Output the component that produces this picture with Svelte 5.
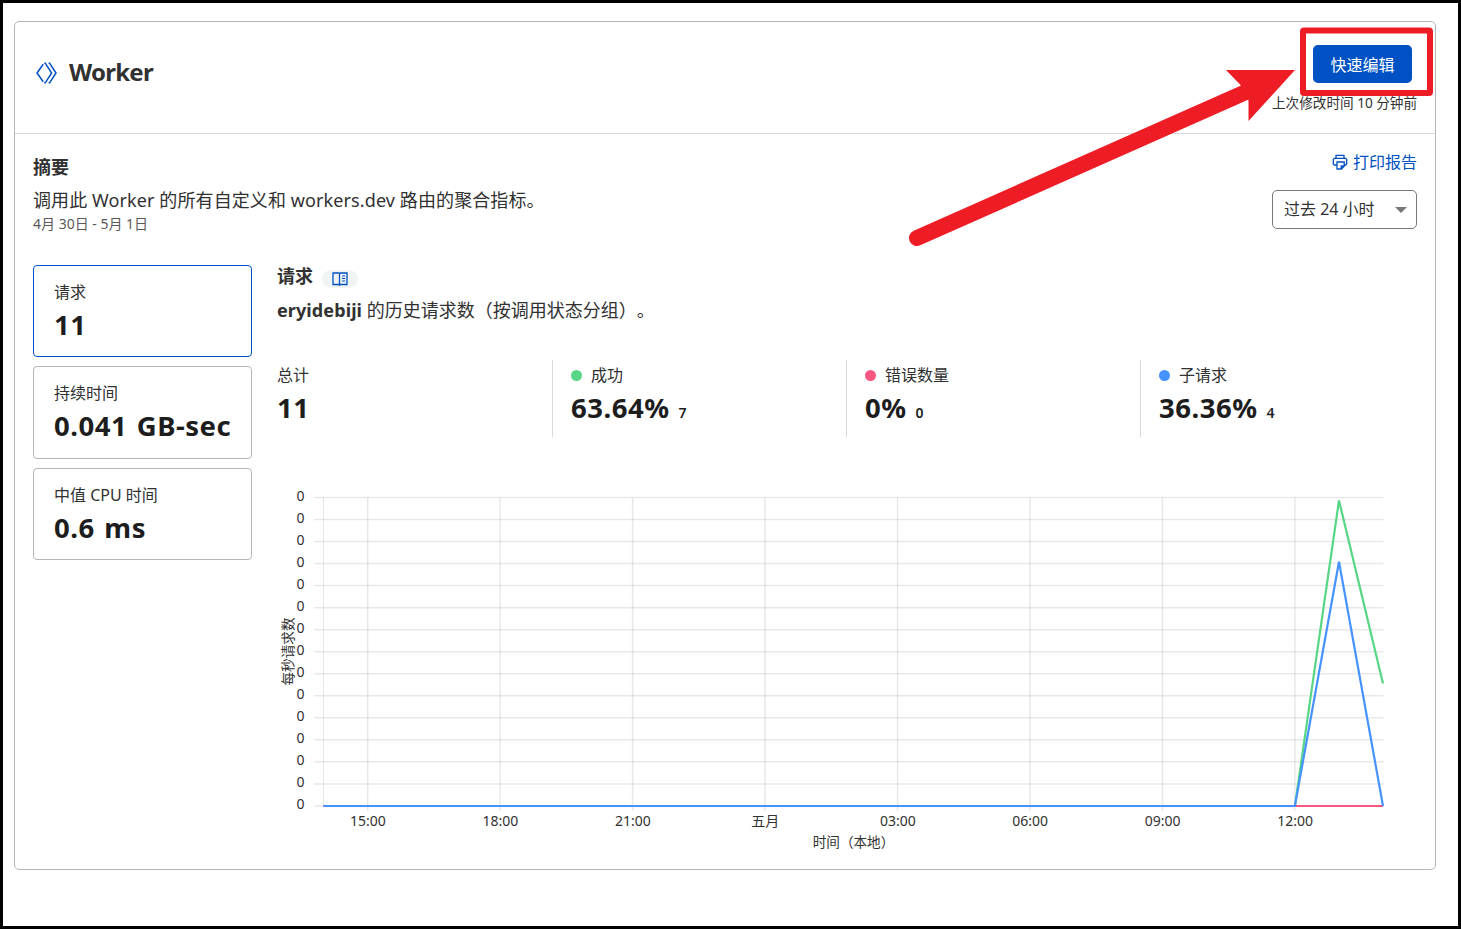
<script lang="ts">
	interface Card {
		label: string;
		value: string;
		active?: boolean;
	}

	interface Stat {
		label: string;
		value: string;
		count?: string;
		color?: string;
	}

	const cards: Card[] = [
		{ label: '请求', value: '11', active: true },
		{ label: '持续时间', value: '0.041 GB-sec' },
		{ label: '中值 CPU 时间', value: '0.6 ms' },
	];

	const stats: Stat[] = [
		{ label: '总计', value: '11' },
		{ label: '成功', value: '63.64%', count: '7', color: '#57d685' },
		{ label: '错误数量', value: '0%', count: '0', color: '#f85782' },
		{ label: '子请求', value: '36.36%', count: '4', color: '#4693ff' },
	];

	// chart geometry, in svg units
	const left = 46.5;
	const right = 1106;
	const top = 17.5;
	const bottom = 326;
	const rows = Array.from({ length: 15 }, (_, i) => top + i * 22.03);

	const hours = ['15:00', '18:00', '21:00', '五月', '03:00', '06:00', '09:00', '12:00'];
	const ticks = hours.map((label, i) => ({ label, x: 90.7 + i * 132.45 }));
</script>

<div class="page">
	<section class="panel">
		<header>
			<div class="title">
				<svg class="logo" width="22" height="22" viewBox="0 0 22 22" aria-hidden="true">
					<path d="M7.2 2.2L1 11l6.2 8.8M8.3 1.2H9.3L15.6 11L9.3 20.8H8.3M12.6 1.2H13.6L20 11L13.6 20.8H12.6" />
				</svg>
				<h1>Worker</h1>
			</div>
			<div class="actions">
				<button class="primary">快速编辑</button>
				<span class="modified">上次修改时间 10 分钟前</span>
			</div>
		</header>

		<div class="summary">
			<div>
				<h2>摘要</h2>
				<p class="desc">调用此 Worker 的所有自定义和 workers.dev 路由的聚合指标。</p>
				<p class="range">4月 30日 - 5月 1日</p>
			</div>
			<div class="tools">
				<a class="print" href="#print">
					<svg width="16" height="16" viewBox="0 0 16 16" aria-hidden="true">
						<path d="M4 4.3V1.3h8v3M4.5 11H2.3L1.3 10V5.3L2.3 4.3H13.7L14.7 5.3V10L13.7 11H12.2M5 8h7.2v4.2l-2.8 2.8H5zM9.2 15v-3h3" />
					</svg>
					<span>打印报告</span>
				</a>
				<button class="select">
					<span>过去 24 小时</span>
					<i class="caret"></i>
				</button>
			</div>
		</div>

		<div class="content">
			<aside>
				{#each cards as card}
					<div class="card" class:active={card.active}>
						<span class="label">{card.label}</span>
						<strong>{card.value}</strong>
					</div>
				{/each}
			</aside>

			<div class="metrics">
				<div class="heading">
					<h2>请求</h2>
					<span class="docs">
						<svg width="16" height="14" viewBox="0 0 16 14" aria-hidden="true">
							<path d="M7.5 1H1v11.5h5.5l1 .8 1-.8H15V1H8.5L7.5 1.8V13" />
							<path class="rows" d="M10 4h3.2M10 6.5h3.2M10 9h3.2" />
						</svg>
					</span>
				</div>
				<p class="history"><b>eryidebiji</b> 的历史请求数（按调用状态分组）。</p>

				<div class="stats">
					{#each stats as stat}
						<div class="stat">
							<div class="label">
								{#if stat.color}
									<i class="dot" style="background:{stat.color}"></i>
								{/if}
								<span>{stat.label}</span>
							</div>
							<div class="figure">
								<strong>{stat.value}</strong>
								{#if stat.count}
									<small>{stat.count}</small>
								{/if}
							</div>
						</div>
					{/each}
				</div>

				<svg class="chart" width="1140" height="380" viewBox="0 0 1140 380">
					<g class="grid">
						{#each rows as y}
							<line x1="37" x2={right + 0.5} y1={y} y2={y} />
						{/each}
						<line class="edge" x1={left} x2={left} y1={top} y2={bottom} />
						{#each ticks as tick}
							<line x1={tick.x} x2={tick.x} y1={top} y2={bottom + 5} />
						{/each}
					</g>
					{#each rows as y}
						<text x="27.5" y={y + 3.1} text-anchor="end">0</text>
					{/each}
					{#each ticks as tick}
						<text x={tick.x + 0.3} y="346.3" text-anchor="middle">{tick.label}</text>
					{/each}
					<text class="axis" transform="translate(15.5 171.5) rotate(-90)" text-anchor="middle">每秒请求数</text>
					<text class="axis" x="576.5" y="366.5" text-anchor="middle">时间（本地）</text>
					<g class="lines">
						<polyline stroke="#57d685" points="{left},{bottom} 1017.9,{bottom} 1062,20.5 {right},203.5" />
						<polyline stroke="#f85782" points="{left},{bottom} {right},{bottom}" />
						<polyline stroke="#4693ff" points="{left},{bottom} 1017.9,{bottom} 1062,81.7 {right},{bottom}" />
					</g>
				</svg>
			</div>
		</div>
	</section>

	<svg class="callout" width="1461" height="929" viewBox="0 0 1461 929" aria-hidden="true">
		<rect x="1303" y="30.5" width="127" height="62.5" rx="1" />
		<path class="shaft" d="M917 238L1246 92" />
		<path class="head" d="M1226 70H1295L1248.5 121V100L1240.5 85z" />
	</svg>
</div>

<style>
	:global(body) {
		margin: 0;
	}
	.page {
		position: relative;
		box-sizing: border-box;
		width: 1461px;
		height: 929px;
		padding: 18px 22px 0 11px;
		border: 3px solid #000;
		background: #fff;
		color: #313131;
		font-family: 'Noto Sans', 'Noto Sans CJK SC', sans-serif;
		font-size: 16px;
		text-spacing-trim: space-all;
		overflow: hidden;
	}
	h1,
	h2,
	p {
		margin: 0;
	}
	.panel {
		box-sizing: border-box;
		width: 1422px;
		height: 849px;
		border: 1px solid #b6b6b6;
		border-radius: 5px;
	}
	header {
		display: flex;
		justify-content: space-between;
		box-sizing: border-box;
		height: 112px;
		padding: 23px 18px 0 21px;
		border-bottom: 1px solid #d9d9d9;
	}
	.title {
		display: flex;
		align-items: center;
		gap: 11px;
		height: 56px;
	}
	h1 {
		margin-top: -2px;
		font-size: 24px;
		font-weight: 700;
		line-height: 32px;
		letter-spacing: -0.75px;
	}
	.logo,
	.print svg,
	.docs svg {
		fill: none;
		stroke: #0051c3;
		stroke-width: 1.3;
	}
	.logo {
		stroke-width: 1.5;
	}
	.actions {
		display: flex;
		flex-direction: column;
		align-items: flex-end;
	}
	button {
		font: inherit;
	}
	.primary {
		width: 99px;
		height: 38px;
		margin-right: 5px;
		padding: 0 0 1px;
		border: 0;
		border-radius: 5px;
		background: #0051c3;
		color: #fff;
	}
	.modified {
		margin-top: 10px;
		font-size: 13.6px;
		line-height: 20px;
	}
	.summary {
		display: flex;
		justify-content: space-between;
		height: 131px;
		padding: 0 18px;
	}
	h2 {
		font-size: 18px;
		font-weight: 700;
		line-height: 26px;
	}
	.summary h2 {
		margin-top: 20px;
	}
	.desc {
		margin-top: 6px;
		font-size: 18px;
		line-height: 28px;
		letter-spacing: 0.1px;
	}
	.range {
		margin-top: 1px;
		font-size: 14px;
		line-height: 18px;
		color: #595959;
	}
	.tools {
		display: flex;
		flex-direction: column;
		align-items: flex-end;
	}
	.print {
		display: flex;
		align-items: center;
		gap: 5px;
		height: 24px;
		margin-top: 15px;
		color: #0051c3;
		text-decoration: none;
	}
	.print svg {
		margin-top: 2px;
	}
	.select {
		display: flex;
		align-items: center;
		justify-content: space-between;
		box-sizing: border-box;
		width: 145px;
		height: 39px;
		margin-top: 17px;
		padding: 0 9px 3px 11px;
		border: 1px solid #797979;
		border-radius: 5px;
		background: #fff;
		color: #313131;
	}
	.caret {
		margin-top: 3px;
		border: 6px solid transparent;
		border-top-color: #797979;
		border-bottom: 0;
	}
	.content {
		display: flex;
		gap: 25px;
		padding-left: 18px;
	}
	aside {
		display: flex;
		flex-direction: column;
		gap: 9.1px;
		width: 219px;
		margin-top: -0.3px;
	}
	.card {
		display: flex;
		flex-direction: column;
		box-sizing: border-box;
		height: 92.5px;
		padding: 14px 20px;
		border: 1px solid #b6b6b6;
		border-radius: 4px;
		white-space: nowrap;
	}
	.card.active {
		border-color: #0051c3;
	}
	.label {
		font-size: 16px;
		line-height: 24px;
	}
	.card strong,
	.figure strong {
		font-size: 27.5px;
		font-weight: 700;
		line-height: 41px;
		letter-spacing: 0.5px;
		word-spacing: 2px;
		color: #1d1d1d;
	}
	.metrics {
		width: 1140px;
	}
	.heading {
		display: flex;
		align-items: center;
		gap: 9px;
		height: 26px;
		margin-top: -2px;
	}
	.docs {
		display: flex;
		align-items: center;
		justify-content: center;
		width: 36px;
		height: 18px;
		margin-top: 6px;
		border-radius: 9px;
		background: #f1f4f5;
	}
	.docs .rows {
		stroke-width: 1;
	}
	.history {
		margin-top: 7px;
		font-size: 18px;
		line-height: 28px;
	}
	.history b {
		font-weight: 700;
		letter-spacing: 0.1px;
	}
	.stats {
		display: flex;
		margin-top: 36px;
	}
	.stat {
		flex: none;
		box-sizing: border-box;
		width: 294px;
		height: 77px;
		padding: 3px 0 0 18px;
		border-left: 1px solid #d9d9d9;
	}
	.stat:first-child {
		width: 275px;
		padding-left: 0;
		border: 0;
	}
	.stat:last-child {
		flex: 1;
		width: auto;
	}
	.stat .label {
		display: flex;
		align-items: center;
		gap: 9px;
	}
	.dot {
		width: 11px;
		height: 11px;
		border-radius: 50%;
	}
	.figure {
		display: flex;
		align-items: baseline;
		gap: 9px;
	}
	.figure small {
		font-size: 14px;
		font-weight: 600;
		color: #1d1d1d;
	}
	.chart {
		display: block;
		margin-top: 43px;
	}
	.chart text {
		fill: #313131;
		font-size: 14px;
	}
	.chart .axis {
		font-size: 13.6px;
	}
	.grid line {
		stroke: #000;
		stroke-opacity: 0.09;
		stroke-width: 1.5;
	}
	.grid .edge {
		stroke-opacity: 0.2;
		stroke-width: 1;
		stroke-dasharray: 1 1;
	}
	.lines {
		fill: none;
		stroke-width: 2.2;
	}
	.callout {
		position: absolute;
		top: -3px;
		left: -3px;
		pointer-events: none;
	}
	.callout rect {
		fill: none;
		stroke: #ee1c25;
		stroke-width: 6;
	}
	.shaft {
		fill: none;
		stroke: #ee1c25;
		stroke-width: 16;
		stroke-linecap: round;
	}
	.head {
		fill: #ee1c25;
	}
</style>
